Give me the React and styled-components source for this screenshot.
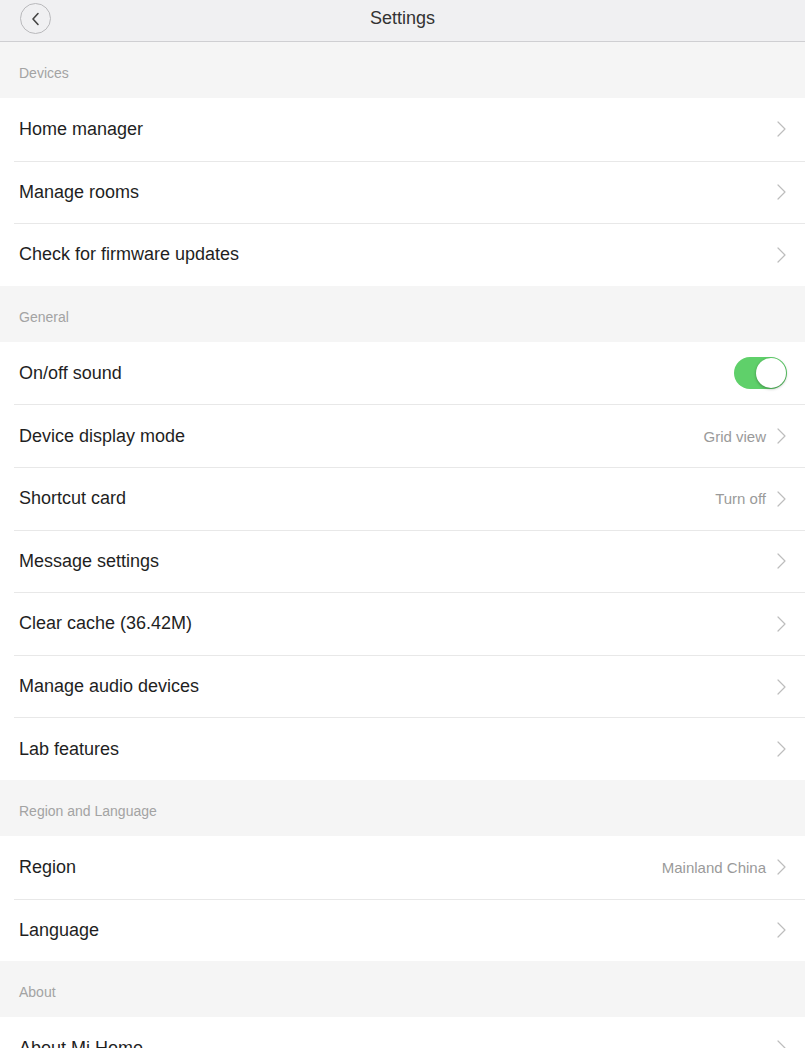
import React from "react";
import styled, { createGlobalStyle } from "styled-components";

const Global = createGlobalStyle`
  html, body { margin: 0; padding: 0; background: #f5f5f5; }
  body { font-family: "Helvetica Neue", "Liberation Sans", Arial, sans-serif; overflow: hidden; }
`;

const Page = styled.div`
  width: 805px;
  min-height: 1048px;
  background: #f5f5f5;
`;

const Header = styled.header`
  height: 41px;
  border-bottom: 1px solid #cfcfd2;
  background: #f0f0f2;
  display: grid;
  grid-template-columns: 60px 1fr 60px;
  align-items: center;
`;

const BackButton = styled.button`
  width: 31px;
  height: 31px;
  margin-left: 20px;
  margin-top: -4px;
  border-radius: 50%;
  border: 1px solid #b9b9bc;
  background: transparent;
  padding: 0;
  display: flex;
  align-items: center;
  justify-content: center;
`;

const Title = styled.h1`
  margin: 0;
  margin-top: -4px;
  text-align: center;
  font-size: 18px;
  font-weight: 400;
  color: #333;
`;

const SectionTitle = styled.div`
  height: 56px;
  box-sizing: border-box;
  padding: 6px 19px 0;
  display: flex;
  align-items: center;
  font-size: 14px;
  color: #a3a3a3;
`;

const Group = styled.div`
  background: #fff;
`;

const Row = styled.div`
  height: 62.6px;
  box-sizing: border-box;
  margin-left: 14px;
  padding: 0 19px 0 5px;
  display: flex;
  align-items: center;
  border-top: ${(p) => (p.$first ? "none" : "1px solid #e8e8e8")};
`;

const Label = styled.span`
  flex: 1;
  font-size: 18px;
  color: #1f1f1f;
`;

const Value = styled.span`
  font-size: 15px;
  color: #9a9a9a;
  margin-right: 11px;
`;

const Toggle = styled.div`
  width: 53px;
  height: 32px;
  border-radius: 16px;
  background: #5fd06a;
  position: relative;
  margin-right: -1px;
`;

const Knob = styled.div`
  position: absolute;
  right: 1px;
  top: 1px;
  width: 30px;
  height: 30px;
  border-radius: 50%;
  background: #fff;
  box-shadow: 0 1px 3px rgba(0, 0, 0, 0.35);
`;

const Chevron = () => (
  <svg width="9" height="16" viewBox="0 0 9 16" fill="none">
    <path d="M1 1l7 7-7 7" stroke="#bdbdbd" strokeWidth="1.2" strokeLinecap="round" strokeLinejoin="round" />
  </svg>
);

const BackIcon = () => (
  <svg width="9" height="14" viewBox="0 0 9 14" fill="none">
    <path d="M7 1.5L2 7l5 5.5" stroke="#444" strokeWidth="1.6" strokeLinecap="round" strokeLinejoin="round" />
  </svg>
);

const sections = [
  {
    title: "Devices",
    rows: [
      { label: "Home manager" },
      { label: "Manage rooms" },
      { label: "Check for firmware updates" },
    ],
  },
  {
    title: "General",
    rows: [
      { label: "On/off sound", toggle: true },
      { label: "Device display mode", value: "Grid view" },
      { label: "Shortcut card", value: "Turn off" },
      { label: "Message settings" },
      { label: "Clear cache (36.42M)" },
      { label: "Manage audio devices" },
      { label: "Lab features" },
    ],
  },
  {
    title: "Region and Language",
    rows: [
      { label: "Region", value: "Mainland China" },
      { label: "Language" },
    ],
  },
  {
    title: "About",
    rows: [{ label: "About Mi Home" }],
  },
];

export default function App() {
  return (
    <Page>
      <Global />
      <Header>
        <BackButton aria-label="Back">
          <BackIcon />
        </BackButton>
        <Title>Settings</Title>
        <span />
      </Header>
      {sections.map((s) => (
        <section key={s.title}>
          <SectionTitle>{s.title}</SectionTitle>
          <Group>
            {s.rows.map((r, i) => (
              <Row key={r.label} $first={i === 0}>
                <Label>{r.label}</Label>
                {r.toggle ? (
                  <Toggle>
                    <Knob />
                  </Toggle>
                ) : (
                  <>
                    {r.value && <Value>{r.value}</Value>}
                    <Chevron />
                  </>
                )}
              </Row>
            ))}
          </Group>
        </section>
      ))}
    </Page>
  );
}
